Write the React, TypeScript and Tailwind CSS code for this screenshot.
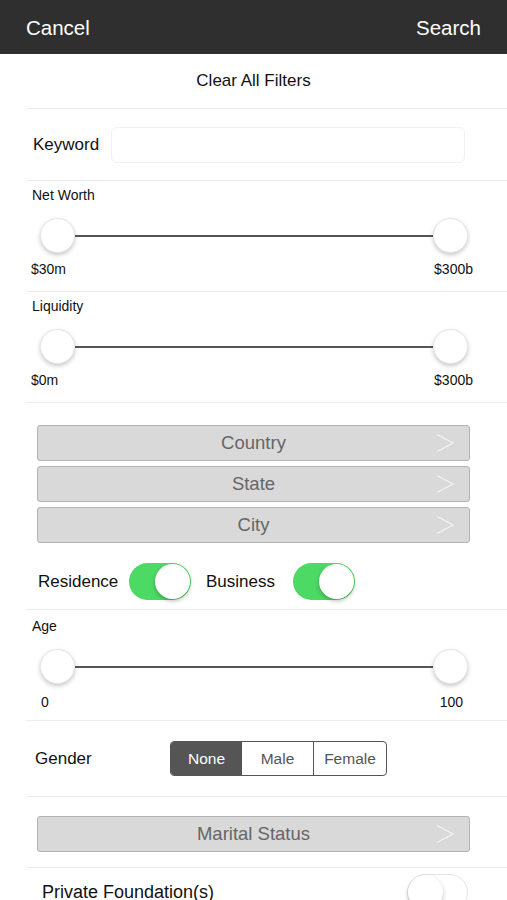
import React from "react"

function Separator() {
  return <div className="ml-[26px] h-px bg-[#ececec]" />
}

function Thumb() {
  return (
    <div className="h-[35px] w-[35px] shrink-0 rounded-full border border-[#e6e6e6] bg-white shadow-[0_2px_4px_rgba(0,0,0,0.22)]" />
  )
}

function RangeRow({ label, low, high, lowClass, highClass, topClass, valuesClass }: { label: string; low: string; high: string; lowClass: string; highClass: string; topClass: string; valuesClass: string }) {
  return (
    <div className={`flex h-[110px] flex-col ${topClass}`}>
      <div className="pl-[32px] text-[14px] leading-[17px] text-[#111]">{label}</div>
      <div className="ml-[40px] mr-[39px] mt-[14px] flex items-center">
        <Thumb />
        <div className="h-[2px] flex-1 bg-[#555]" />
        <Thumb />
      </div>
      <div className={`flex justify-between text-[14px] leading-[17px] text-[#111] ${valuesClass}`}>
        <span className={lowClass}>{low}</span>
        <span className={highClass}>{high}</span>
      </div>
    </div>
  )
}

function Chevron() {
  return (
    <svg width="18" height="20" viewBox="0 0 18 20" className="absolute right-[15px] top-[7px]">
      <polyline points="1,1.5 17,10 1,18.5" fill="none" stroke="#f2f2f2" strokeWidth="1.3" />
    </svg>
  )
}

function PickerButton({ label }: { label: string }) {
  return (
    <div className="relative mx-[37px] flex h-[36px] items-center justify-center rounded-[3px] border border-[#b3b3b3] bg-[#d9d9d9] text-[18.5px] text-[#666]">
      {label}
      <Chevron />
    </div>
  )
}

function Toggle({ on }: { on: boolean }) {
  if (on) {
    return (
      <div className="flex h-[37px] w-[62px] items-center justify-end rounded-full bg-[#4cd964] pr-px">
        <div className="h-[35px] w-[35px] rounded-full bg-white shadow-[0_2px_4px_rgba(0,0,0,0.25)]" />
      </div>
    )
  }
  return (
    <div className="flex h-[37px] w-[61px] items-center rounded-full border border-[#e5e5e5] bg-white">
      <div className="h-[35px] w-[35px] rounded-full bg-white shadow-[0_2px_4px_rgba(0,0,0,0.25)]" />
    </div>
  )
}

export default function App() {
  return (
    <div className="h-[900px] w-[507px] overflow-hidden bg-white font-['Liberation_Sans',Arial,sans-serif] text-[#111]">
      <div className="flex h-[54px] items-center justify-between bg-[#2f2f2f] px-[26px] pt-[2px] text-[20.5px] text-white">
        <span>Cancel</span>
        <span>Search</span>
      </div>

      <div className="flex h-[54px] items-center justify-center text-[17px]">Clear All Filters</div>
      <Separator />

      <div className="flex h-[71px] items-center pl-[33px] pr-[42px]">
        <span className="w-[78px] text-[17px]">Keyword</span>
        <input className="h-[36px] flex-1 rounded-[6px] border border-[#f0f0f0] bg-white outline-none" />
      </div>
      <Separator />

      <RangeRow label="Net Worth" low="$30m" high="$300b" lowClass="pl-[31px]" highClass="pr-[34px]" topClass="pt-[6px]" valuesClass="mt-[8px]" />
      <Separator />

      <RangeRow label="Liquidity" low="$0m" high="$300b" lowClass="pl-[31px]" highClass="pr-[34px]" topClass="pt-[6px]" valuesClass="mt-[8px]" />
      <Separator />

      <div className="flex h-[206px] flex-col pt-[22px]">
        <div className="flex flex-col gap-[5px]">
          <PickerButton label="Country" />
          <PickerButton label="State" />
          <PickerButton label="City" />
        </div>
        <div className="mt-[20px] flex items-center pl-[38px] text-[17px]">
          <span className="w-[91px]">Residence</span>
          <Toggle on />
          <span className="ml-[15px] w-[87px]">Business</span>
          <Toggle on />
        </div>
      </div>
      <Separator />

      <RangeRow label="Age" low="0" high="100" lowClass="pl-[41px]" highClass="pr-[44px]" topClass="pt-[8px]" valuesClass="mt-[10px]" />
      <Separator />

      <div className="flex h-[75px] items-center pl-[35px]">
        <span className="w-[135px] text-[17px]">Gender</span>
        <div className="flex h-[35px] overflow-hidden rounded-[4px] border border-[#555] text-[15.5px]">
          <div className="flex w-[71px] items-center justify-center bg-[#555] text-white">None</div>
          <div className="flex w-[72px] items-center justify-center border-r border-[#555] text-[#555]">Male</div>
          <div className="flex w-[72px] items-center justify-center text-[#555]">Female</div>
        </div>
      </div>
      <Separator />

      <div className="flex h-[70px] flex-col pt-[19px]">
        <PickerButton label="Marital Status" />
      </div>
      <Separator />

      <div className="flex items-start justify-between pl-[42px] pr-[39px] pt-[6px]">
        <span className="pt-[5px] text-[18px]">Private Foundation(s)</span>
        <Toggle on={false} />
      </div>
    </div>
  )
}
